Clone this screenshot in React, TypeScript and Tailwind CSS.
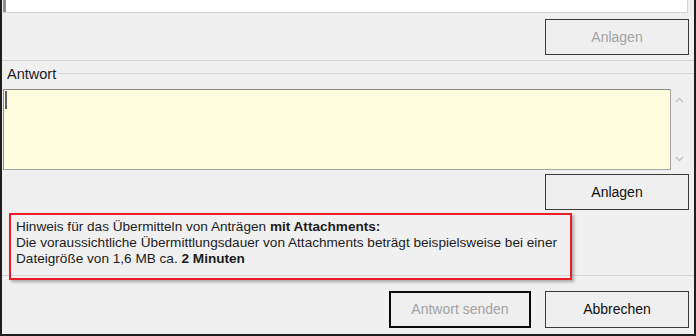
import React from 'react';

function WinButton({ label, disabled, focused, className }: { label: string; disabled?: boolean; focused?: boolean; className?: string }) {
  return (
    <div
      className={
        'flex items-center justify-center bg-[#efefef] text-[14px] ' +
        (focused ? 'border-2 border-[#0a0a0a] ' : 'border border-[#3a3a3a] ') +
        (disabled ? 'text-[#a3a3a3] ' : 'text-[#111] ') +
        (className ?? '')
      }
    >
      {label}
    </div>
  );
}

function Chevron({ up }: { up?: boolean }) {
  return (
    <svg width="9" height="6" viewBox="0 0 9 6" fill="none">
      <polyline
        points={up ? '1,5 4.5,1.5 8,5' : '1,1 4.5,4.5 8,1'}
        stroke="#c2c2c2"
        strokeWidth="1.4"
      />
    </svg>
  );
}

export default function App() {
  return (
    <div className="w-[696px] h-[336px] bg-[#f0f0f0] border-x-2 border-b-2 border-[#1e1e1e] flex flex-col overflow-hidden font-['Liberation_Sans',Arial,sans-serif] text-[#111]">
      {/* bottom of the question text box above */}
      <div className="h-[13px] ml-px mr-[6px] flex bg-white border-b border-r border-[#d4d4d4]">
        <div className="w-[3px] bg-[#8f8f8f]" />
      </div>

      <div className="flex justify-end mt-[6px] mr-[5px]">
        <WinButton label="Anlagen" disabled className="w-[144px] h-[36px]" />
      </div>

      <div className="mt-[5px] border-t border-[#d6d6d6]" />

      {/* Antwort group header */}
      <div className="flex h-[16px] mt-[5px]">
        <span className="pl-[5px] pr-[2px] text-[14.5px] leading-[16px] text-[#1a1a2a]">Antwort</span>
        <div className="flex-1 h-px mt-[7px] bg-[#d6d6d6]" />
      </div>

      <div className="flex mt-[7px]">
        <div className="ml-px w-[668px] h-[81px] bg-[#ffffdf] border border-[#a3a3a3] border-t-[#8a8a8a] border-l-[#8a8a8a]">
          <div className="ml-px mt-[1px] w-[2px] h-[18px] bg-[#5c5c6e]" />
        </div>
        <div className="ml-[4px] w-[9px] flex flex-col justify-between py-[8px]">
          <Chevron up />
          <Chevron />
        </div>
      </div>

      <div className="flex justify-end mt-[4px] mr-[5px]">
        <WinButton label="Anlagen" className="w-[144px] h-[36px]" />
      </div>

      {/* hint about attachments */}
      <div className="relative h-[65px]">
        <div className="pt-[9px] pl-[14px] text-[13.6px] leading-[16px] text-[#1c1c1c]">
          <div>
            Hinweis für das Übermitteln von Anträgen <b>mit Attachments:</b>
          </div>
          <div>Die voraussichtliche Übermittlungsdauer von Attachments beträgt beispielsweise bei einer</div>
          <div>
            Dateigröße von 1,6 MB ca. <b>2 Minuten</b>
          </div>
        </div>
        <div className="absolute top-[3px] left-[7px] w-[563px] h-[67px] border-2 border-[#ee1c24] shadow-[2px_2px_3px_rgba(0,0,0,0.3)] z-10" />
      </div>

      <div className="border-t border-[#d6d6d6]" />

      <div className="flex justify-end gap-[14px] mt-[15px] mr-[5px]">
        <WinButton label="Antwort senden" disabled focused className="w-[142px] h-[37px]" />
        <WinButton label="Abbrechen" className="w-[144px] h-[37px]" />
      </div>
    </div>
  );
}
